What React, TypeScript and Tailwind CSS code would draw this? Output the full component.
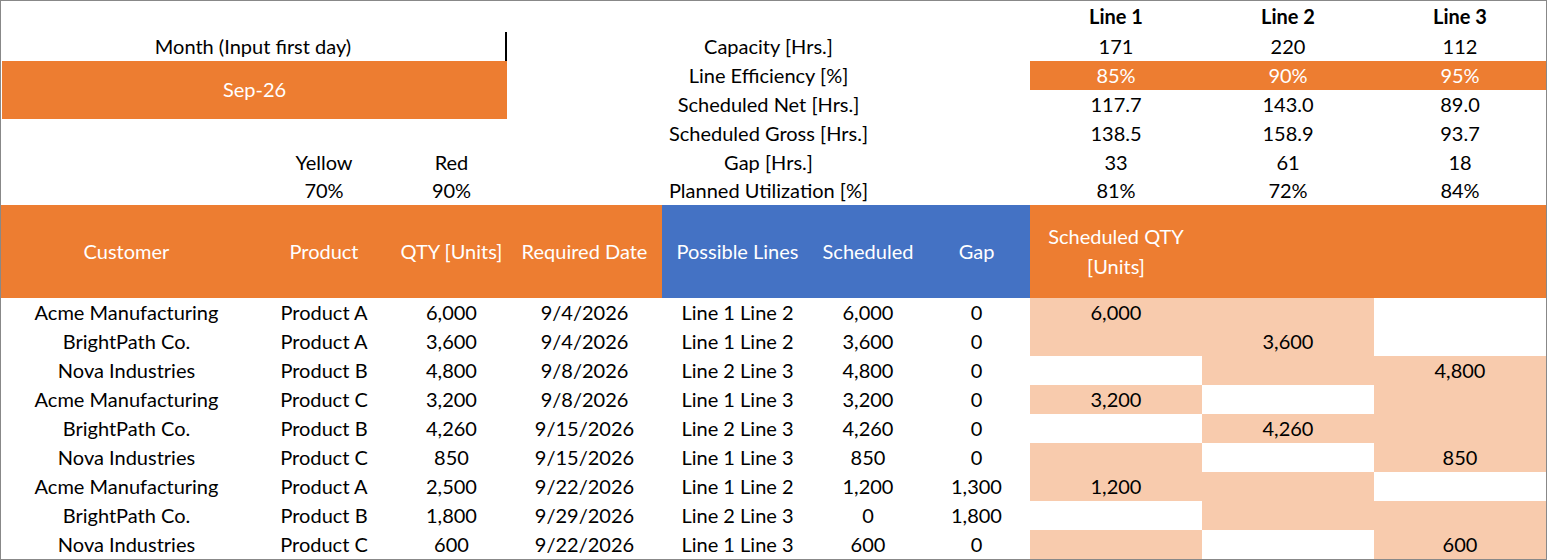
import React from "react";

type Order = {
  customer: string;
  product: string;
  qty: string;
  date: string;
  lines: number[];
  scheduled: string;
  gap: string;
  perLine: string[];
};

const orders: Order[] = [
  { customer: "Acme Manufacturing", product: "Product A", qty: "6,000", date: "9/4/2026", lines: [1, 2], scheduled: "6,000", gap: "0", perLine: ["6,000", "", ""] },
  { customer: "BrightPath Co.", product: "Product A", qty: "3,600", date: "9/4/2026", lines: [1, 2], scheduled: "3,600", gap: "0", perLine: ["", "3,600", ""] },
  { customer: "Nova Industries", product: "Product B", qty: "4,800", date: "9/8/2026", lines: [2, 3], scheduled: "4,800", gap: "0", perLine: ["", "", "4,800"] },
  { customer: "Acme Manufacturing", product: "Product C", qty: "3,200", date: "9/8/2026", lines: [1, 3], scheduled: "3,200", gap: "0", perLine: ["3,200", "", ""] },
  { customer: "BrightPath Co.", product: "Product B", qty: "4,260", date: "9/15/2026", lines: [2, 3], scheduled: "4,260", gap: "0", perLine: ["", "4,260", ""] },
  { customer: "Nova Industries", product: "Product C", qty: "850", date: "9/15/2026", lines: [1, 3], scheduled: "850", gap: "0", perLine: ["", "", "850"] },
  { customer: "Acme Manufacturing", product: "Product A", qty: "2,500", date: "9/22/2026", lines: [1, 2], scheduled: "1,200", gap: "1,300", perLine: ["1,200", "", ""] },
  { customer: "BrightPath Co.", product: "Product B", qty: "1,800", date: "9/29/2026", lines: [2, 3], scheduled: "0", gap: "1,800", perLine: ["", "", ""] },
  { customer: "Nova Industries", product: "Product C", qty: "600", date: "9/22/2026", lines: [1, 3], scheduled: "600", gap: "0", perLine: ["", "", "600"] },
];

// summary rows on the right: label + Line 1..3
const summary: { label: string; values: string[]; accent?: boolean }[] = [
  { label: "Capacity [Hrs.]", values: ["171", "220", "112"] },
  { label: "Line Efficiency [%]", values: ["85%", "90%", "95%"], accent: true },
  { label: "Scheduled Net [Hrs.]", values: ["117.7", "143.0", "89.0"] },
  { label: "Scheduled Gross [Hrs.]", values: ["138.5", "158.9", "93.7"] },
  { label: "Gap [Hrs.]", values: ["33", "61", "18"] },
  { label: "Planned Utilization [%]", values: ["81%", "72%", "84%"] },
];

const cell = "flex items-center justify-center whitespace-nowrap pb-[2px]";

function LeftBlock({ row }: { row: number }) {
  // what sits in the first three columns of summary row `row`
  switch (row) {
    case 0:
      return (
        <div className={`${cell} col-span-3 border-r-2 border-black`}>
          Month (Input first day)
        </div>
      );
    case 1:
      return (
        <div className="col-span-3 row-span-2 pl-px">
          <div className={`${cell} h-full bg-[#ed7d31] text-white`}>Sep-26</div>
        </div>
      );
    case 2:
      return null;
    case 3:
      return <div className="col-span-3" />;
    case 4:
      return (
        <>
          <div />
          <div className={cell}>Yellow</div>
          <div className={cell}>Red</div>
        </>
      );
    default:
      return (
        <>
          <div />
          <div className={cell}>70%</div>
          <div className={cell}>90%</div>
        </>
      );
  }
}

export default function App() {
  return (
    <div className="w-[1547px] h-[560px] bg-white border border-[#888] font-['Lato','Liberation_Sans',sans-serif] text-[20px] text-black overflow-hidden">
      <div className="grid grid-cols-[251px_144px_111px_155px_151px_110px_107px_172px_172px_172px] grid-rows-[31px_29px_29px_29px_29px_29px_28px_93px_repeat(9,29px)]">
        {/* line titles */}
        <div className="col-span-7" />
        <div className={`${cell} font-bold`}>Line 1</div>
        <div className={`${cell} font-bold`}>Line 2</div>
        <div className={`${cell} font-bold`}>Line 3</div>

        {summary.map((s, i) => (
          <React.Fragment key={s.label}>
            <LeftBlock row={i} />
            <div className={`${cell} col-span-4`}>{s.label}</div>
            {s.values.map((v, j) => (
              <div
                key={j}
                className={`${cell} ${s.accent ? "bg-[#ed7d31] text-white" : ""}`}
              >
                {v}
              </div>
            ))}
          </React.Fragment>
        ))}

        {/* table header */}
        {["Customer", "Product", "QTY [Units]", "Required Date"].map((h) => (
          <div key={h} className={`${cell} bg-[#ed7d31] text-white`}>
            {h}
          </div>
        ))}
        {["Possible Lines", "Scheduled", "Gap"].map((h) => (
          <div key={h} className={`${cell} bg-[#4472c4] text-white`}>
            {h}
          </div>
        ))}
        <div className="flex flex-col items-center justify-center bg-[#ed7d31] text-white leading-[30px] pb-[2px]">
          <span>Scheduled QTY</span>
          <span>[Units]</span>
        </div>
        <div className="bg-[#ed7d31]" />
        <div className="bg-[#ed7d31]" />

        {/* orders */}
        {orders.map((o, i) => (
          <React.Fragment key={i}>
            <div className={cell}>{o.customer}</div>
            <div className={cell}>{o.product}</div>
            <div className={cell}>{o.qty}</div>
            <div className={cell}>{o.date}</div>
            <div className={cell}>
              Line {o.lines[0]} Line {o.lines[1]}
            </div>
            <div className={cell}>{o.scheduled}</div>
            <div className={cell}>{o.gap}</div>
            {[1, 2, 3].map((ln) => (
              <div
                key={ln}
                className={`${cell} ${o.lines.includes(ln) ? "bg-[#f8cbad]" : ""}`}
              >
                {o.perLine[ln - 1]}
              </div>
            ))}
          </React.Fragment>
        ))}
      </div>
    </div>
  );
}
